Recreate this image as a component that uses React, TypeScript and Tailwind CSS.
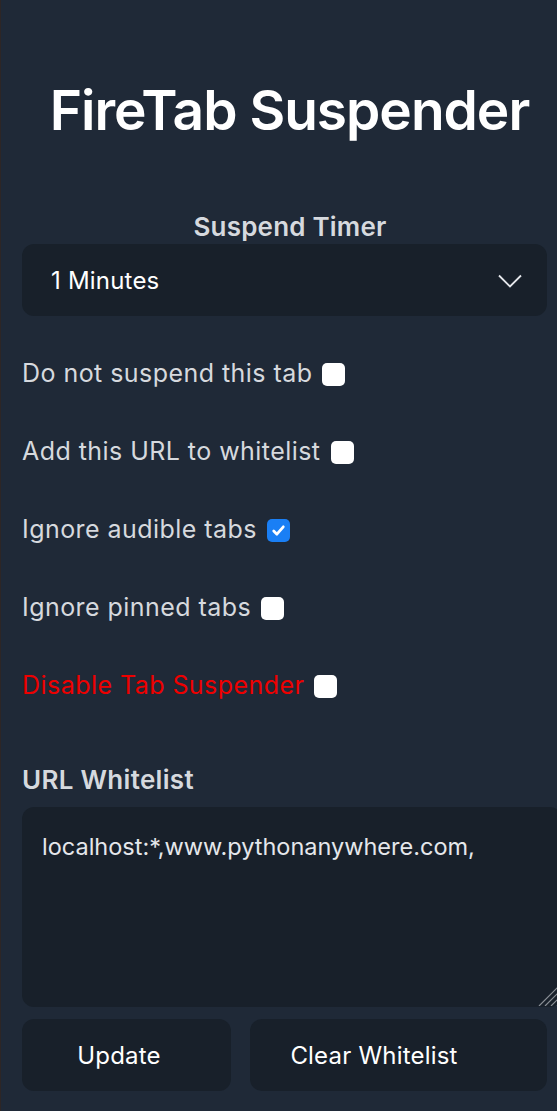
import React from "react";

function Check({ checked }: { checked?: boolean }) {
  return checked ? (
    <span className="inline-flex h-[23px] w-[23px] items-center justify-center rounded-[5px] bg-[#1a7ff5]">
      <svg viewBox="0 0 16 16" className="h-[17px] w-[17px]" fill="none" stroke="white" strokeWidth="2.6" strokeLinecap="round" strokeLinejoin="round">
        <path d="M3.5 8.5l3 3 6-7" />
      </svg>
    </span>
  ) : (
    <span className="inline-block h-[23px] w-[23px] rounded-[5px] bg-white" />
  );
}

function Row({ label, checked, red }: { label: string; checked?: boolean; red?: boolean }) {
  return (
    <div className="flex h-[78px] items-center gap-[10px]">
      <span className={red ? "text-[#ee0000]" : "text-[#d6d9de]"}>{label}</span>
      <Check checked={checked} />
    </div>
  );
}

export default function App() {
  return (
    <div
      className="min-h-screen w-full overflow-hidden border-l border-[#2d2626] bg-[#1f2937] pl-[21px] text-[25px] tracking-[0.45px]"
      style={{ fontFamily: "Inter, 'Noto Sans', sans-serif" }}
    >
      <h1 className="pt-[74px] pb-[66px] text-center text-[55px] font-semibold leading-[72px] text-white tracking-[-1px]">
        FireTab Suspender
      </h1>
      <div className="w-[536px]">
        <div className="text-center text-[26px] font-semibold text-[#d6d9de] leading-[30px] tracking-[0.2px]">Suspend Timer</div>
      </div>
      <div className="mt-[2px] flex h-[72px] w-[525px] items-center justify-between rounded-[12px] bg-[#18202a] pl-[29px] pr-[25px] pt-[2px] text-[24px] tracking-[0.2px] text-white">
        <span>1 Minutes</span>
        <svg viewBox="0 0 24 14" className="h-[16px] w-[24px]" fill="none" stroke="#e5e7eb" strokeWidth="1.8">
          <path d="M1 1.5l11 11 11-11" />
        </svg>
      </div>
      <div className="mt-[19px]">
        <Row label="Do not suspend this tab" />
        <Row label="Add this URL to whitelist" />
        <Row label="Ignore audible tabs" checked />
        <Row label="Ignore pinned tabs" />
        <Row label="Disable Tab Suspender" red />
      </div>
      <div className="mt-[40px] text-[26px] font-semibold leading-[30px] tracking-[0.3px] text-[#d6d9de]">URL Whitelist</div>
      <div className="relative mt-[12px] h-[200px] w-[540px] rounded-[12px] bg-[#18202a] px-[20px] pt-[22px] text-[23.5px] tracking-normal text-[#e5e7eb]">
        localhost:*,www.pythonanywhere.com,
        <svg viewBox="0 0 24 24" className="absolute bottom-[1px] right-[1px] h-[24px] w-[24px]" stroke="#8a8f96" strokeWidth="1.2">
          <path d="M24 2L2 24M24 8L8 24M24 14L14 24M24 20L20 24" />
        </svg>
      </div>
      <div className="mt-[12px] flex w-[525px] gap-[19px] text-[24px] tracking-[0.2px] text-white">
        <button className="h-[72px] w-[209px] rounded-[12px] bg-[#18202a] pr-[15px] pt-[1px]">Update</button>
        <button className="h-[72px] flex-1 rounded-[12px] bg-[#18202a] pr-[49px] pt-[1px]">Clear Whitelist</button>
      </div>
    </div>
  );
}
